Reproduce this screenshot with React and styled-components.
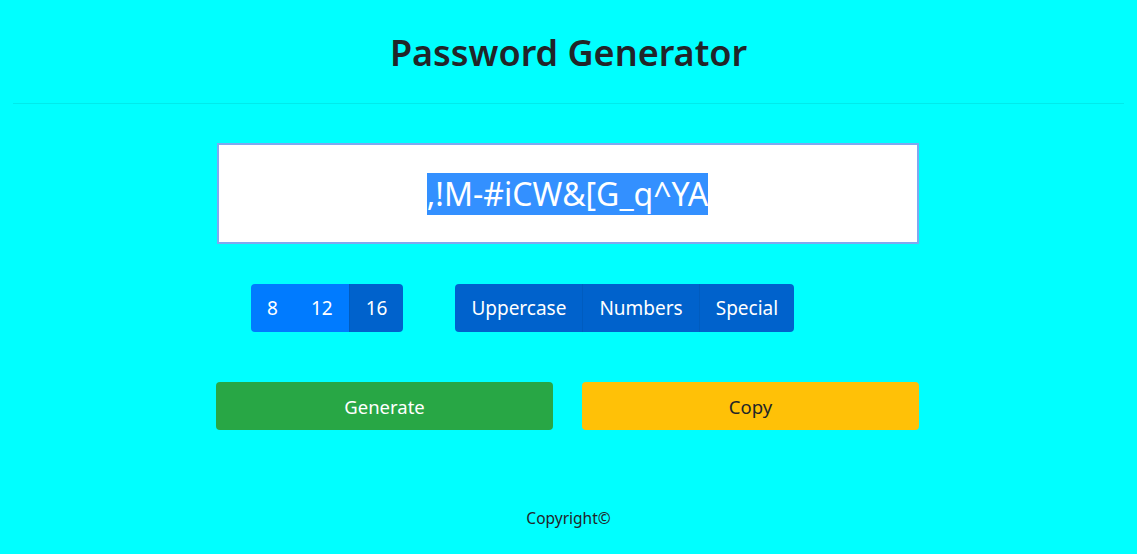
import React, { useState } from "react";
import styled, { createGlobalStyle } from "styled-components";

const GlobalStyle = createGlobalStyle`
  html, body {
    margin: 0;
    padding: 0;
    background: #00ffff;
    font-family: "Noto Sans", "Open Sans", sans-serif;
    color: #212529;
  }
  * { box-sizing: border-box; }
`;

const App = () => {
  const [length, setLength] = useState(16);
  const [opts, setOpts] = useState({ Uppercase: true, Numbers: true, Special: true });
  const password = ",!M-#iCW&[G_q^YA";

  return (
    <Page>
      <GlobalStyle />
      <Title>Password Generator</Title>
      <Rule />
      <Main>
        <Output>
          <Selected>{password}</Selected>
        </Output>
        <OptionsRow>
          <Group>
            {[8, 12, 16].map((n) => (
              <GroupButton key={n} active={length === n} onClick={() => setLength(n)}>
                {n}
              </GroupButton>
            ))}
          </Group>
          <Group>
            {Object.keys(opts).map((k) => (
              <GroupButton
                key={k}
                active={opts[k]}
                onClick={() => setOpts({ ...opts, [k]: !opts[k] })}
              >
                {k}
              </GroupButton>
            ))}
          </Group>
        </OptionsRow>
        <ActionRow>
          <ActionButton bg="#28a745" fg="#fff">Generate</ActionButton>
          <ActionButton bg="#ffc107" fg="#212529">Copy</ActionButton>
        </ActionRow>
      </Main>
      <Footer>Copyright©</Footer>
    </Page>
  );
};

const Page = styled.div`
  width: 100%;
  min-height: 554px;
  display: flex;
  flex-direction: column;
  align-items: center;
`;

const Title = styled.h1`
  margin: 29px 0 0;
  font-size: 36px;
  font-weight: 600;
  line-height: 48px;
  color: #212529;
`;

const Rule = styled.hr`
  align-self: stretch;
  margin: 26px 13px 0;
  border: 0;
  border-top: 1px solid rgba(0, 0, 0, 0.08);
`;

const Main = styled.div`
  width: 703px;
  margin-right: 2px;
  display: flex;
  flex-direction: column;
  align-items: center;
`;

const Output = styled.div`
  margin-top: 39px;
  width: 702px;
  height: 101px;
  background: #fff;
  border: 2px solid #80a8f0;
  display: flex;
  align-items: center;
  justify-content: center;
`;

const Selected = styled.span`
  background: #3390ff;
  color: #fff;
  font-size: 32px;
  line-height: 42px;
`;

const OptionsRow = styled.div`
  margin-top: 40px;
  display: flex;
  gap: 52px;
  margin-left: 35px;
  align-self: flex-start;
`;

const Group = styled.div`
  display: flex;
  border-radius: 4px;
  overflow: hidden;
`;

const GroupButton = styled.button`
  height: 48px;
  padding: 0 16px;
  border: 0;
  border-left: 1px solid ${(p) => (p.active ? "#005cbf" : "#007bff")};
  &:first-child { border-left: 0; }
  background: ${(p) => (p.active ? "#0062cc" : "#007bff")};
  color: #fff;
  font-family: inherit;
  font-size: 19px;
  cursor: pointer;
`;

const ActionRow = styled.div`
  margin-top: 50px;
  width: 100%;
  display: flex;
  justify-content: space-between;
`;

const ActionButton = styled.button`
  width: 337px;
  height: 48px;
  border: 0;
  border-radius: 4px;
  background: ${(p) => p.bg};
  color: ${(p) => p.fg};
  font-family: inherit;
  font-size: 18.5px;
  cursor: pointer;
`;

const Footer = styled.footer`
  margin-top: 78px;
  font-size: 15.5px;
  line-height: 20px;
`;

export default App;
